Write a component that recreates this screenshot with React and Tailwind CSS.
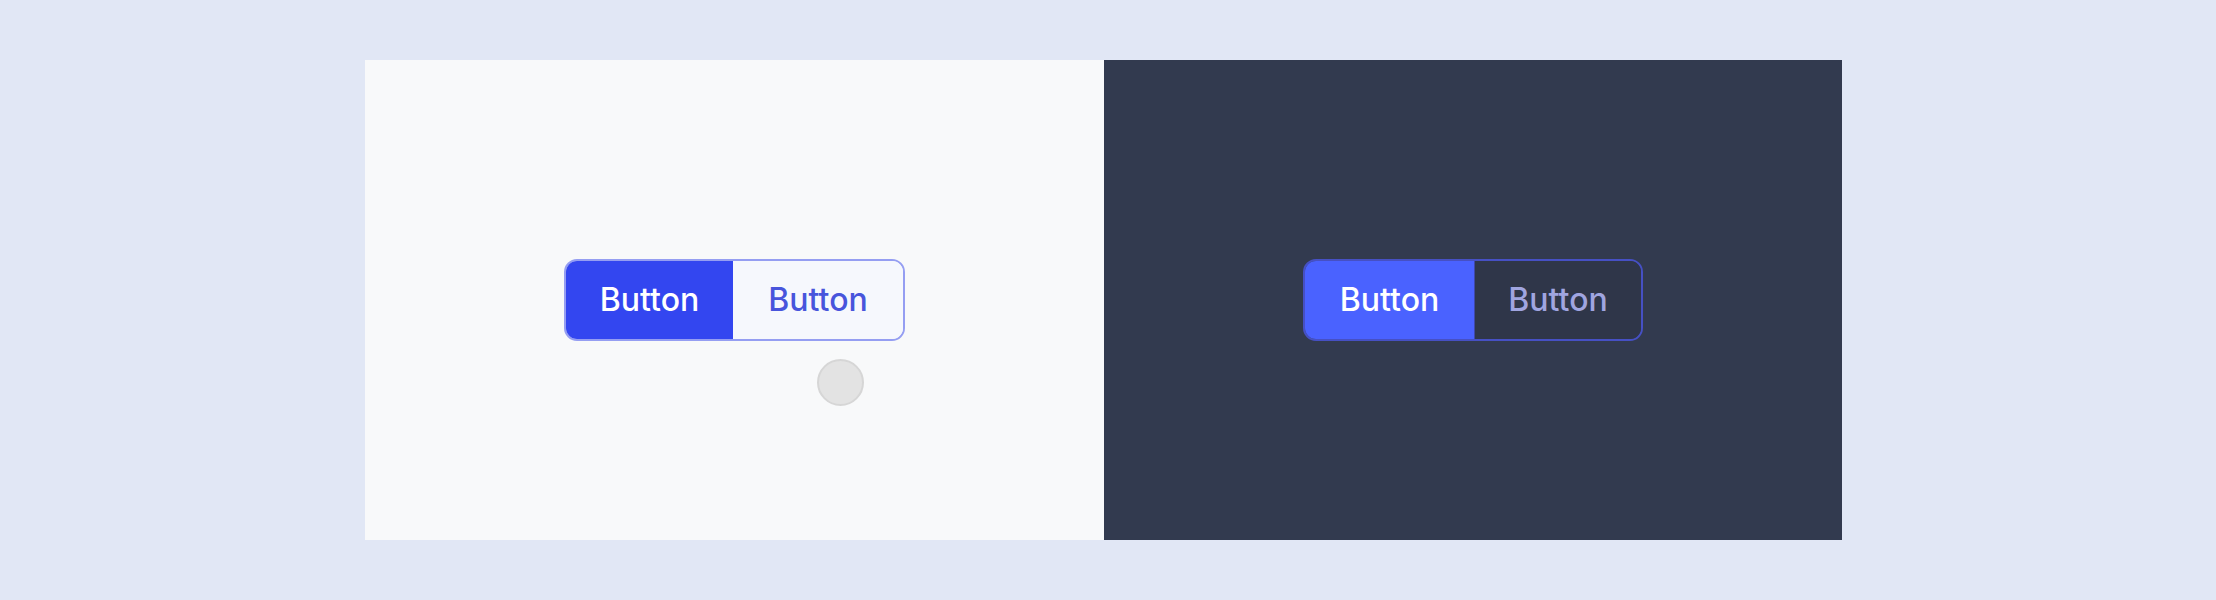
export default function App() {
  return (
    <div className="flex h-[600px] w-full items-center bg-[#e1e7f5] pl-[365px] font-['Inter',sans-serif]">
      <div className="flex h-[480px]">
        <div className="relative flex w-[739px] items-center justify-center bg-[#f8f9fa]">
          <div className="flex h-[82px] overflow-hidden rounded-[13px] border-2 border-[#959ef2] text-[32px] font-medium leading-none">
            <button className="flex w-[167px] items-center justify-center bg-[#3346f0] text-white">Button</button>
            <button className="flex w-[170px] items-center justify-center bg-[#f6f8fd] text-[#4855dc]">Button</button>
          </div>
          <div className="absolute left-[452px] top-[299px] h-[47px] w-[47px] rounded-full border-2 border-[#d6d6d6] bg-[#e3e3e3]" />
        </div>
        <div className="flex w-[738px] items-center justify-center bg-[#323a4f]">
          <div className="flex h-[82px] overflow-hidden rounded-[13px] border-2 border-[#4650c4] text-[32px] font-medium leading-none">
            <button className="flex w-[169px] items-center justify-center bg-[#4a62ff] text-white">Button</button>
            <button className="flex w-[167px] items-center justify-center border-l border-[#3f48a8] bg-[#2f3649] text-[#a0a5e0]">Button</button>
          </div>
        </div>
      </div>
    </div>
  )
}
